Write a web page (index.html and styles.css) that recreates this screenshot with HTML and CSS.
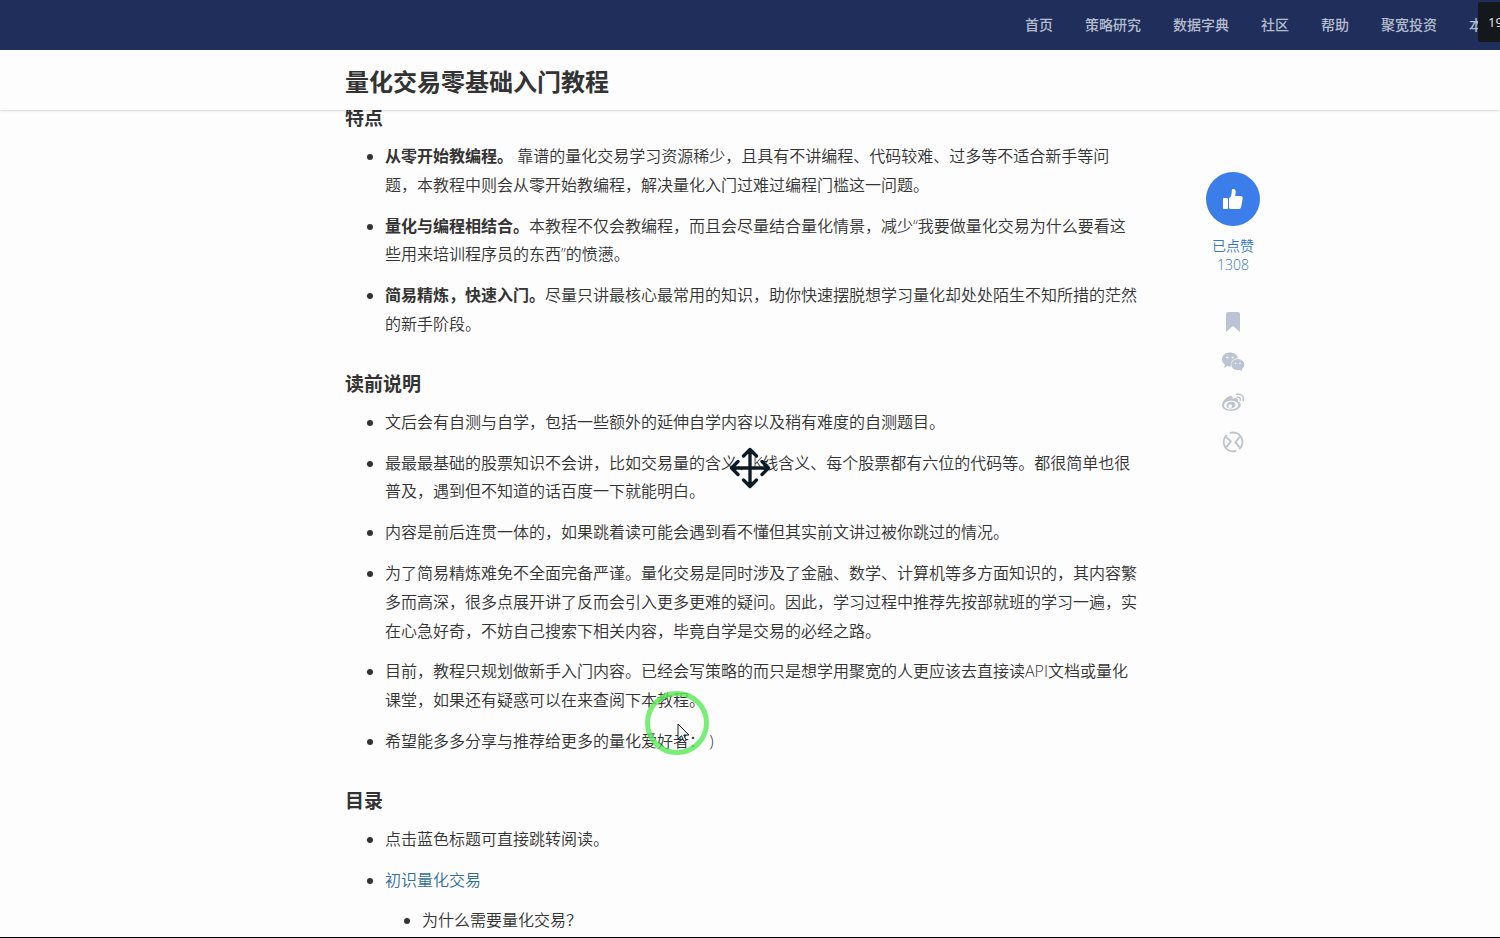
FILE: index.html
```html
<!DOCTYPE html>
<html lang="zh-CN">
<head>
<meta charset="utf-8">
<title>量化交易零基础入门教程</title>
<link rel="stylesheet" href="styles.css">
</head>
<body>
<header class="topbar">
  <nav class="nav">
    <a href="#">首页</a>
    <a href="#">策略研究</a>
    <a href="#">数据字典</a>
    <a href="#">社区</a>
    <a href="#">帮助</a>
    <a href="#">聚宽投资</a>
    <a href="#">本</a>
  </nav>
  <div class="corner-badge">19</div>
</header>
<div class="titlebar">
  <h1 class="title">量化交易零基础入门教程</h1>
</div>
<main class="page">
  <article class="article">
    <h2>特点</h2>
    <ul>
      <li><strong>从零开始教编程。</strong> 靠谱的量化交易学习资源稀少，且具有不讲编程、代码较难、过多等不适合新手等问题，本教程中则会从零开始教编程，解决量化入门过难过编程门槛这一问题。</li>
      <li><strong>量化与编程相结合。</strong>本教程不仅会教编程，而且会尽量结合量化情景，减少“我要做量化交易为什么要看这些用来培训程序员的东西”的愤懑。</li>
      <li><strong>简易精炼，快速入门。</strong>尽量只讲最核心最常用的知识，助你快速摆脱想学习量化却处处陌生不知所措的茫然的新手阶段。</li>
    </ul>
    <h2>读前说明</h2>
    <ul>
      <li>文后会有自测与自学，包括一些额外的延伸自学内容以及稍有难度的自测题目。</li>
      <li>最最最基础的股票知识不会讲，比如交易量的含义、K线含义、每个股票都有六位的代码等。都很简单也很普及，遇到但不知道的话百度一下就能明白。</li>
      <li>内容是前后连贯一体的，如果跳着读可能会遇到看不懂但其实前文讲过被你跳过的情况。</li>
      <li>为了简易精炼难免不全面完备严谨。量化交易是同时涉及了金融、数学、计算机等多方面知识的，其内容繁多而高深，很多点展开讲了反而会引入更多更难的疑问。因此，学习过程中推荐先按部就班的学习一遍，实在心急好奇，不妨自己搜索下相关内容，毕竟自学是交易的必经之路。</li>
      <li>目前，教程只规划做新手入门内容。已经会写策略的而只是想学用聚宽的人更应该去直接读API文档或量化课堂，如果还有疑惑可以在来查阅下本教程。</li>
      <li>希望能多多分享与推荐给更多的量化爱好者： )</li>
    </ul>
    <h2>目录</h2>
    <ul>
      <li>点击蓝色标题可直接跳转阅读。</li>
      <li><a href="#">初识量化交易</a>
        <ul>
          <li>为什么需要量化交易？</li>
        </ul>
      </li>
    </ul>
  </article>
  <aside class="actions">
    <button class="like" type="button" aria-label="点赞">
      <svg width="20" height="20" viewBox="0 0 20 20" fill="#fff"><rect x="0" y="9" width="5" height="11" rx="1"/><path d="M6 9.500C8.500 8 8.600 5 8.800 1.800 8.900.4 9.600 0 10.400 0c1.800 0 2.500 1.500 2.300 3.500L12.200 7H17.500c1.700 0 2.500 1.200 2.200 2.600l-1.500 7.800C17.900 19.200 17 20 15.500 20H8.500C7.300 20 6.600 19.700 6 19.200z"/></svg>
    </button>
    <div class="like-text">已点赞</div>
    <div class="like-text">1308</div>
    <div class="share">
      <button type="button" aria-label="收藏"><svg width="24" height="24" viewBox="0 0 24 24"><path fill="#bcc4d3" d="M5 4q0-2 2-2h10q2 0 2 2v18l-7-6-7 6z"/></svg></button>
      <button type="button" aria-label="微信"><svg width="24" height="24" viewBox="0 0 24 24"><path fill="#bcc4d3" d="M9 2.500c-4.400 0-8 2.900-8 6.800 0 2.300 1.100 4.100 2.900 5.300L3.200 18l3-2c1 .4 2 .5 2.900.5h.8c-.9-4.500 2.400-8.200 7.100-8.300C16.300 4.800 13 2.500 9 2.500z"/><ellipse cx="16.800" cy="14.600" rx="6.600" ry="5.600" fill="#bcc4d3"/><path fill="#bcc4d3" d="M18 19l3.200 2.500-.6-3.500z"/><g fill="#fdfdfd"><circle cx="6.200" cy="7.500" r="1.100"/><circle cx="11.600" cy="7.500" r="1.100"/><circle cx="14.700" cy="13.200" r=".8"/><circle cx="19" cy="13.200" r=".8"/></g></svg></button>
      <button type="button" aria-label="微博"><svg width="24" height="24" viewBox="0 0 24 24"><path fill="#bfc4cc" fill-rule="evenodd" d="M9.500 6C6 6.500 1 11.200 1 15.300 1 19 5.400 21 10 21c5.600 0 9.800-3 9.800-6.200 0-2-1.500-2.900-3-3.300.5-1.600.3-3-1.200-3.300-1.300-.3-2.800.1-4.200.7.4-1.700.2-3.200-1.900-2.900zM10 10.800c4.300 0 7.200 1.900 7.200 4.300 0 2.400-3 4.300-7.200 4.300s-7-1.700-7-4c0-2.600 3-4.600 7-4.600z"/><path fill="#bfc4cc" fill-rule="evenodd" d="M9.800 11.800c2.700-.3 4.700 1 4.700 3s-2.100 3.700-4.900 3.800c-2.500.1-4.200-1.200-4.100-3 .1-1.900 1.900-3.600 4.300-3.800zM9.200 14.200a1.900 1.900 0 1 0 .1 3.800A1.900 1.900 0 0 0 9.200 14.200z"/><path fill="none" stroke="#bfc4cc" stroke-width="1.400" stroke-linecap="round" d="M15.500 4.200c4.400-1.200 8 2.300 6.800 6.900M16 7.200c2.200-.5 3.800 1.100 3.300 3.200"/></svg></button>
      <button type="button" aria-label="分享"><svg width="24" height="24" viewBox="0 0 24 24" fill="none" stroke="#bfc4cc" stroke-width="2" stroke-linecap="round" stroke-linejoin="round"><path d="M9.500 2.900A9.300 9.300 0 0 1 18.600 18.500M14.500 21A9.300 9.300 0 0 1 5.400 5.500"/><path d="M6 8L9.800 11.300 6 16.500M18.200 7.500L14.400 12.500 18 16.500"/></svg></button>
    </div>
  </aside>
</main>
<svg class="move-mark" width="42" height="42" viewBox="0 0 42 42" fill="none" stroke="#0c1a26" stroke-width="3.300" stroke-linecap="round" stroke-linejoin="round"><path d="M21 3v36M3 21h36M14.500 9l6.500-6.500 6.500 6.500M14.500 33l6.500 6.500 6.500-6.500M9 14.500l-6.500 6.500 6.500 6.500M33 14.500l6.500 6.500-6.500 6.500"/></svg>
<div class="click-ring">
  <svg width="14" height="20" viewBox="0 0 14 20"><path d="M1 1v15l3.500-3.200 2.500 5.600 2.200-1-2.400-5.400H12z" fill="#f4f6f6" stroke="#14202a"/></svg>
</div>
</body>
</html>
```
FILE: styles.css
```css
* {
  box-sizing: border-box;
}

body {
  display: flex;
  flex-direction: column;
  position: relative;
  height: 100vh;
  margin: 0;
  overflow: hidden;
  border-bottom: 1px solid #000;
  background: #fdfdfd;
  color: #333;
  font: 350 16px/1.8 "Open Sans", "Noto Sans CJK SC", sans-serif;
}

button {
  display: flex;
  align-items: center;
  justify-content: center;
  padding: 0;
  border: 0;
  background: none;
  cursor: pointer;
}

strong {
  font-weight: 700;
}

.topbar {
  position: relative;
  display: flex;
  flex: none;
  align-items: center;
  justify-content: flex-end;
  height: 50px;
  padding-right: 17px;
  background: #1f2e5b;
}

.nav {
  display: flex;
  gap: 32px;
}

.nav a {
  color: #b6bdcf;
  font-size: 14px;
  font-weight: 500;
  line-height: 20px;
  text-decoration: none;
}

.corner-badge {
  position: absolute;
  top: 2px;
  right: 0;
  width: 22px;
  height: 40px;
  padding-left: 10px;
  overflow: hidden;
  border-radius: 3px 0 0 3px;
  background: #14171c;
  color: #e8e8e8;
  font-size: 13px;
  font-weight: 400;
  line-height: 40px;
}

.titlebar,
.page {
  display: grid;
  grid-template-columns: 1fr minmax(0, 810px) 1fr;
}

.titlebar {
  position: relative;
  z-index: 1;
  flex: none;
  align-items: center;
  height: 60px;
  background: #fdfdfd;
  box-shadow: 0 1px 2px rgba(0, 0, 0, 0.14);
}

.title {
  grid-column: 2;
  margin: 0;
  padding-top: 4px;
  font-size: 24px;
  line-height: 36px;
}

.page {
  flex: 1;
  min-height: 0;
  margin-top: -2px;
}

.article {
  grid-column: 2;
  padding-right: 15px;
}

.article h2 {
  margin: 35px 0 13px;
  font-size: 19px;
  line-height: 21px;
}

.article h2:first-child {
  margin-top: 0;
}

.article ul {
  margin: 0;
  padding-left: 40px;
}

.article li {
  margin-bottom: 12px;
}

.article li ul {
  margin-top: 12px;
  padding-left: 37px;
  list-style: disc;
}

.article a {
  color: #337099;
  text-decoration: none;
}

.actions {
  display: flex;
  flex-direction: column;
  align-items: center;
  justify-self: start;
  width: 54px;
  margin: 64px 0 0 51px;
}

.like {
  width: 54px;
  height: 54px;
  margin-bottom: 10px;
  border-radius: 50%;
  background: #3b7de9;
}

.like-text {
  color: #3579c4;
  font-size: 14px;
  line-height: 19px;
}

.share {
  display: flex;
  flex-direction: column;
  gap: 16px;
  margin-top: 36px;
}

.move-mark {
  position: absolute;
  top: 447px;
  left: calc(50% - 21px);
}

.click-ring {
  position: absolute;
  top: 691px;
  left: calc(50% - 105px);
  width: 64px;
  height: 64px;
  padding: 27px 0 0 27px;
  border: 5px solid rgba(91, 234, 88, 0.82);
  border-radius: 50%;
}

.click-ring svg {
  display: block;
}
```
